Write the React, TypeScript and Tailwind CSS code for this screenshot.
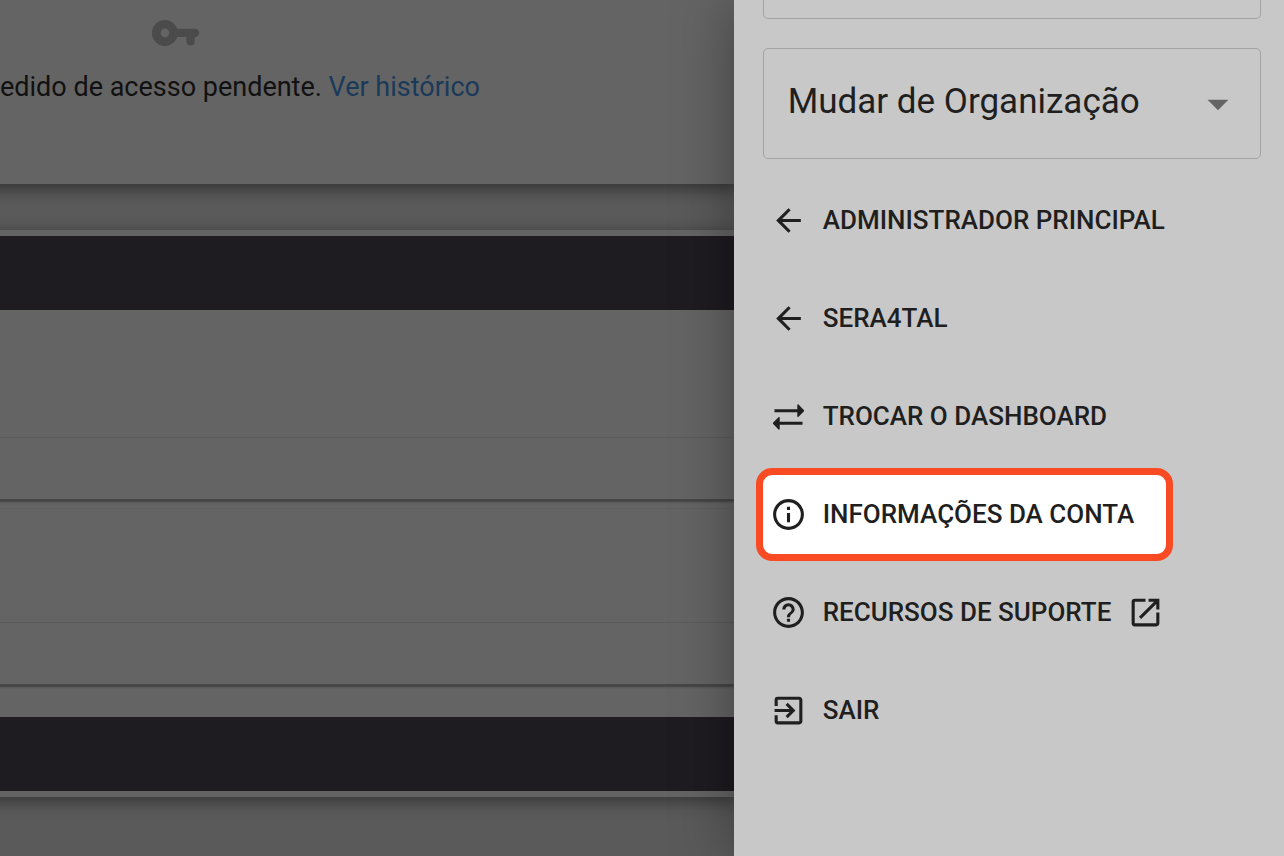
import type { ReactNode } from 'react';
import {
  MdArrowBack,
  MdArrowDropDown,
  MdExitToApp,
  MdHelpOutline,
  MdInfoOutline,
  MdOpenInNew,
} from 'react-icons/md';

interface MenuItem {
  label: string;
  icon: ReactNode;
  trailing?: ReactNode;
  active?: boolean;
}

const MENU_ITEMS: MenuItem[] = [
  { label: 'ADMINISTRADOR PRINCIPAL', icon: <MdArrowBack size={37} /> },
  { label: 'SERA4TAL', icon: <MdArrowBack size={37} /> },
  { label: 'TROCAR O DASHBOARD', icon: <SwapIcon /> },
  { label: 'INFORMAÇÕES DA CONTA', icon: <MdInfoOutline size={37} />, active: true },
  {
    label: 'RECURSOS DE SUPORTE',
    icon: <MdHelpOutline size={37} />,
    trailing: <MdOpenInNew size={37} />,
  },
  { label: 'SAIR', icon: <MdExitToApp size={37} /> },
];

export default function App() {
  return (
    <div className="grid min-h-screen grid-cols-[4fr_3fr] overflow-hidden bg-[#5a5a5a] font-[Roboto,sans-serif]">
      <Dashboard />
      <Drawer />
    </div>
  );
}

function Dashboard() {
  return (
    <main className="-ml-5 min-w-0">
      {/* Pending requests */}
      <section className="h-[184px] bg-[#646464] pt-5 pl-5 shadow-[0_4px_14px_2px_rgba(0,0,0,0.4)]">
        <KeyIcon />
        <p className="mt-6 text-[27px] leading-[34px] whitespace-nowrap text-[#111111]">
          edido de acesso pendente.{' '}
          <a href="#" className="text-[#1b3a5a]">
            Ver histórico
          </a>
        </p>
      </section>

      {/* Tables */}
      <section className="mt-[46px] bg-[#646464] py-1.5 shadow-[0_4px_14px_2px_rgba(0,0,0,0.35)]">
        <div className="h-[74px] bg-[#1e1b21]" />
        <Panel rowClass="h-32" />
        <div className="h-2" />
        <Panel rowClass="h-[115px] border-t border-t-[#606060]" />
        <div className="h-8" />
        <div className="h-[74px] bg-[#1e1b21]" />
      </section>
    </main>
  );
}

function Panel({ rowClass }: { rowClass: string }) {
  return (
    <div className="shadow-[0_2px_2px_rgba(0,0,0,0.35)]">
      <div className={`border-b border-b-[#5b5b5b] ${rowClass}`} />
      <div className="h-[62px] border-b border-b-[#484848]" />
    </div>
  );
}

function Drawer() {
  return (
    <aside className="relative z-10 bg-[#c8c8c8] pr-[23px] text-[#1f1f1f] shadow-[0_0_56px_rgba(0,0,0,0.36)]">
      <div className="ml-[29px] h-[19px] rounded-b-[5px] border border-t-0 border-[#a3a3a3]" />

      <div className="relative mt-[29px] ml-[29px]">
        <select
          aria-label="Mudar de Organização"
          className="h-[111px] w-full appearance-none rounded-[5px] border border-[#a3a3a3] bg-transparent pr-16 pb-0.5 pl-6 text-[35px]"
        >
          <option>Mudar de Organização</option>
        </select>
        <MdArrowDropDown
          size={50}
          className="pointer-events-none absolute top-1/2 right-[18px] -translate-y-1/2 text-[#646464]"
        />
      </div>

      <nav className="mt-[15px] ml-[22px] flex flex-col items-start gap-[5px]">
        {MENU_ITEMS.map((item) => (
          <MenuButton key={item.label} item={item} />
        ))}
      </nav>
    </aside>
  );
}

function MenuButton({ item }: { item: MenuItem }) {
  return (
    <button
      type="button"
      className={`flex h-[93px] items-center gap-4 rounded-[16px] border-[7px] pr-8 pl-[7px] text-[26px] font-medium whitespace-nowrap ${
        item.active ? 'border-[#f94b23] bg-white' : 'border-transparent'
      }`}
    >
      {item.icon}
      {item.label}
      {item.trailing}
    </button>
  );
}

function KeyIcon() {
  return (
    <svg viewBox="0 0 48 26" className="ml-[152px] h-[26px] w-12" fill="#4b4b4b">
      <path
        fillRule="evenodd"
        d="M13 0a13 13 0 0 1 12.2 8.7H43a4.2 4.2 0 0 1 0 8.4h-.4v4.4a4.1 4.1 0 0 1-8.2 0v-4.4h-9.2A13 13 0 1 1 13 0Zm0 8.6a4.3 4.3 0 1 0 0 8.6 4.3 4.3 0 0 0 0-8.6Z"
      />
    </svg>
  );
}

function SwapIcon() {
  return (
    <svg viewBox="0 0 37 37" width={37} height={37} fill="currentColor">
      <path d="M4.5 11.200h22.800V7.200c0-.9.700-1.200 1.200-.6l5.300 5.300c.5.500.5 1.100 0 1.600l-5.300 5.300c-.5.600-1.200.3-1.200-.6v-4H4.500ZM32.500 23.800H9.700v-4c0-.9-.7-1.200-1.200-.6l-5.300 5.300c-.5.500-.5 1.100 0 1.600l5.300 5.300c.5.600 1.200.3 1.200-.6v-4h22.800Z" />
    </svg>
  );
}
